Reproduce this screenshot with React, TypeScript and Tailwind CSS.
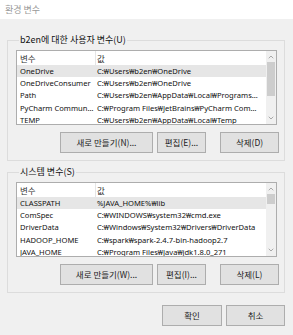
import { ChevronDown, ChevronUp } from 'lucide-react';

type Row = { name: string; value: string };

const userVars: Row[] = [
  { name: 'OneDrive', value: 'C:₩Users₩b2en₩OneDrive' },
  { name: 'OneDriveConsumer', value: 'C:₩Users₩b2en₩OneDrive' },
  { name: 'Path', value: 'C:₩Users₩b2en₩AppData₩Local₩Programs₩Python₩Python39' },
  { name: 'PyCharm Community Edition', value: 'C:₩Program Files₩JetBrains₩PyCharm Community Edition' },
  { name: 'TEMP', value: 'C:₩Users₩b2en₩AppData₩Local₩Temp' },
];

const systemVars: Row[] = [
  { name: 'CLASSPATH', value: '%JAVA_HOME%₩lib' },
  { name: 'ComSpec', value: 'C:₩WINDOWS₩system32₩cmd.exe' },
  { name: 'DriverData', value: 'C:₩Windows₩System32₩Drivers₩DriverData' },
  { name: 'HADOOP_HOME', value: 'C:₩spark₩spark-2.4.7-bin-hadoop2.7' },
  { name: 'JAVA_HOME', value: 'C:₩Program Files₩Java₩jdk1.8.0_271' },
];

function Button({ label, className = '' }: { label: string; className?: string }) {
  return (
    <button
      type="button"
      className={`flex h-[21px] items-center justify-center border border-[#adadad] bg-[#e1e1e1] text-[8.5px] text-[#222] ${className}`}
    >
      {label}
    </button>
  );
}

function VarList({ rows, thumbHeight }: { rows: Row[]; thumbHeight: string }) {
  return (
    <div className="flex h-[75px] w-[261px] overflow-hidden border border-[#adadad] bg-white">
      <div className="min-w-0 flex-1">
        <div className="flex h-[14px] items-center text-[8.5px] text-[#333]">
          <span className="w-[78px] pl-[3px]">변수</span>
          <span className="h-full w-px bg-[#e5e5e5]" />
          <span className="pl-[1px]">값</span>
        </div>
        <div className="font-['Noto_Sans','Noto_Sans_CJK_KR',sans-serif] text-[7.6px] text-[#111]">
          {rows.map((row, i) => (
            <div key={row.name} className={`flex h-[12.4px] items-center ${i === 0 ? 'bg-[#e6e6e6]' : ''}`}>
              <span className="w-[79px] truncate pl-[3px] pr-[2px]">{row.name}</span>
              <span className="min-w-0 flex-1 truncate pl-[1px] pr-[4px]">{row.value}</span>
            </div>
          ))}
        </div>
      </div>
      <div className="flex w-[10px] flex-col items-center bg-[#f0f0f0]">
        <ChevronUp size={8} strokeWidth={1.5} className="mt-[2px] text-[#606060]" />
        <div className={`mt-[1px] w-[8px] bg-[#cdcdcd] ${thumbHeight}`} />
        <div className="flex-1" />
        <ChevronDown size={8} strokeWidth={1.5} className="mb-[2px] text-[#606060]" />
      </div>
    </div>
  );
}

function Group({
  title,
  rows,
  labels,
  thumbHeight,
  className = '',
}: {
  title: string;
  rows: Row[];
  labels: [string, string, string];
  thumbHeight: string;
  className?: string;
}) {
  return (
    <fieldset className={`w-[278px] border border-[#dcdcdc] pl-[8px] pb-[7px] ${className}`}>
      <legend className="ml-[3px] px-[1px] text-[9px] leading-[12px] text-[#111]">{title}</legend>
      <div className="mt-[4px]">
        <VarList rows={rows} thumbHeight={thumbHeight} />
      </div>
      <div className="mt-[7px] flex">
        <Button label={labels[0]} className="ml-[44px] w-[93px]" />
        <Button label={labels[1]} className="ml-[4px] w-[49px]" />
        <Button label={labels[2]} className="ml-[14px] w-[59px]" />
      </div>
    </fieldset>
  );
}

export default function App() {
  return (
    <div
      className="flex h-[335px] w-[293px] flex-col bg-[#f0f0f0]"
      style={{ fontFamily: '"Noto Sans CJK KR", sans-serif' }}
    >
      <div className="flex h-[19px] items-center bg-white pl-[5px] text-[9px] text-[#999]">환경 변수</div>
      <div className="flex flex-col px-[7px]">
        <Group
          title="b2en에 대한 사용자 변수(U)"
          rows={userVars}
          labels={['새로 만들기(N)...', '편집(E)...', '삭제(D)']}
          thumbHeight="h-[34px]"
          className="mt-[15px]"
        />
        <Group
          title="시스템 변수(S)"
          rows={systemVars}
          labels={['새로 만들기(W)...', '편집(I)...', '삭제(L)']}
          thumbHeight="h-[10px]"
          className="mt-[5px]"
        />
        <div className="mt-[12px] flex justify-end pr-[1px]">
          <Button label="확인" className="h-[20px] w-[60px]" />
          <Button label="취소" className="ml-[4px] h-[20px] w-[59px]" />
        </div>
      </div>
    </div>
  );
}
